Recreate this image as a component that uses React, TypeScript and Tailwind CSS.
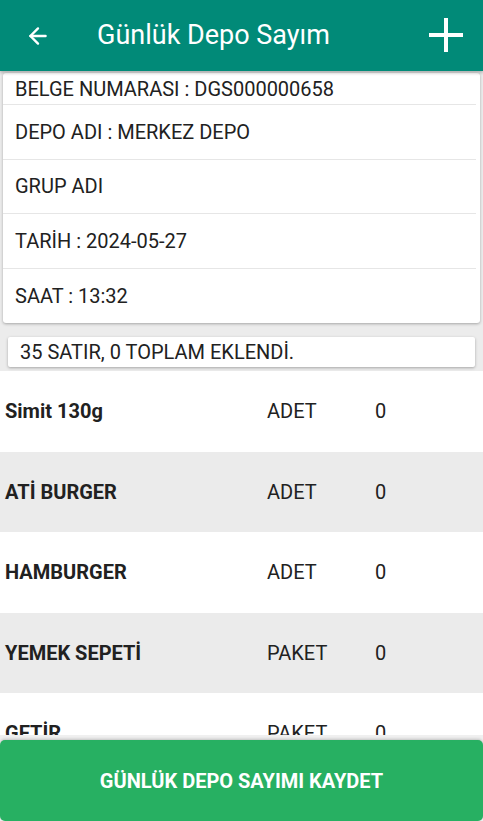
import { ArrowLeft } from "lucide-react"

const infoRows = [
  "DEPO ADI : MERKEZ DEPO",
  "GRUP ADI",
  "TARİH : 2024-05-27",
  "SAAT : 13:32",
]

const items = [
  { name: "Simit 130g", unit: "ADET", qty: 0 },
  { name: "ATİ BURGER", unit: "ADET", qty: 0 },
  { name: "HAMBURGER", unit: "ADET", qty: 0 },
  { name: "YEMEK SEPETİ", unit: "PAKET", qty: 0 },
  { name: "GETİR", unit: "PAKET", qty: 0 },
  { name: "TRENDYOL", unit: "PAKET", qty: 0 },
]

export default function App() {
  return (
    <div className="h-[821px] w-[483px] flex flex-col overflow-hidden bg-[#ececec] font-['Roboto',sans-serif] text-[#212121]">
      <header className="relative z-10 h-[71px] shrink-0 flex items-center bg-[#018a78] text-white shadow-[0_2px_3px_rgba(0,0,0,0.25)]">
        <ArrowLeft className="ml-[25px] w-[26px] h-[26px]" strokeWidth={2.2} />
        <h1 className="ml-[46px] text-[27px] leading-none">Günlük Depo Sayım</h1>
        <svg className="ml-auto mr-[20px] -mt-[2px]" width="34" height="34" viewBox="0 0 34 34">
          <rect x="0" y="15" width="34" height="4" fill="white" />
          <rect x="15" y="0" width="4" height="34" fill="white" />
        </svg>
      </header>

      <div className="mx-[3px] mt-[2px] bg-white rounded-[3px] shadow-[0_1px_3px_rgba(0,0,0,0.3)]">
        <div className="h-[32px] flex items-center pl-[12px] border-b border-[#e6e6e6] mr-[4px] text-[20px]">
          BELGE NUMARASI : DGS000000658
        </div>
        {infoRows.map((row, i) => (
          <div
            key={row}
            className={`h-[54.5px] flex items-center pl-[12px] mr-[4px] text-[20px] ${i < infoRows.length - 1 ? "border-b border-[#e6e6e6]" : ""}`}
          >
            {row}
          </div>
        ))}
      </div>

      <div className="mx-[8px] mt-[14px] h-[30px] flex items-center pl-[12px] bg-white rounded-[2px] shadow-[0_1px_3px_rgba(0,0,0,0.3)] text-[20px]">
        35 SATIR, 0 TOPLAM EKLENDİ.
      </div>

      <div className="mt-[4px] flex-1 overflow-hidden bg-white">
        {items.map((item, i) => (
          <div
            key={item.name}
            className={`h-[80.5px] flex items-center text-[20px] ${i % 2 === 1 ? "bg-[#ebebeb]" : "bg-white"}`}
          >
            <span className="w-[267px] pl-[5px] font-bold">{item.name}</span>
            <span className="w-[108px]">{item.unit}</span>
            <span>{item.qty}</span>
          </div>
        ))}
      </div>

      <div className="relative -mt-[5px] h-[86px] shrink-0 pt-[5px] bg-[#f0f0f0]">
        <button className="w-full h-[81px] bg-[#27b062] rounded-[5px] text-white font-bold text-[20px] shadow-[0_-1px_3px_rgba(0,0,0,0.2)]">
          GÜNLÜK DEPO SAYIMI KAYDET
        </button>
      </div>
    </div>
  )
}
